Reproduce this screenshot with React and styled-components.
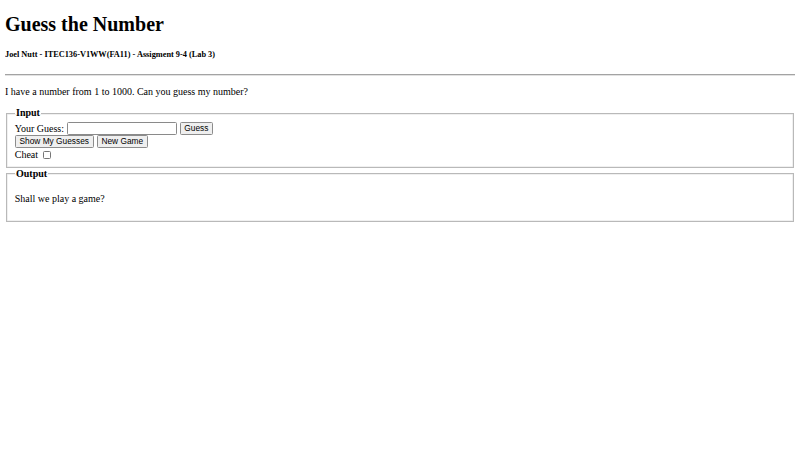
import React, { useState } from 'react'
import styled, { createGlobalStyle } from 'styled-components'

const Global = createGlobalStyle`
  body {
    margin: 0 5px 5px;
    font-family: "Liberation Serif", "Times New Roman", serif;
    font-size: 10px;
    line-height: 11.5px;
    color: #000;
    background: #fff;
  }
`

const Title = styled.h1`
  font-size: 20px;
  line-height: 23px;
  font-weight: bold;
  margin: 13.4px 0;
`

const Byline = styled.h5`
  font-size: 8.3px;
  line-height: 9.6px;
  font-weight: bold;
  margin: 13.9px 0;
`

const Rule = styled.hr`
  height: 0;
  border: 0;
  border-top: 1px solid #a3a3a3;
  border-bottom: 1px solid #e2e2e2;
  margin: 5px 0;
`

const Intro = styled.p`
  margin: 10px 0;
`

const Box = styled.fieldset`
  margin: 0 1.25px;
  padding: 3.5px 7.5px 6.25px;
  border: 1px solid #b9b9b9;
  box-shadow: inset 0 0 0 0.5px #e2e2e2;
  min-width: 0;
`

const Legend = styled.legend`
  font-weight: bold;
  padding: 0 1.25px;
`

const Row = styled.div`
  display: flex;
  align-items: center;
  gap: ${p => p.$gap || 2.5}px;
  height: ${p => p.$h || 13}px;
  white-space: nowrap;
`

const Field = styled.input`
  box-sizing: border-box;
  width: 110px;
  height: 13px;
  padding: 0 2px;
  border: 1px solid #8a8a8a;
  border-radius: 1.5px;
  font: 8.33px "Liberation Sans", Arial, sans-serif;
  margin: 0 0.5px 0 0;
  outline: none;
`

const Button = styled.button`
  box-sizing: border-box;
  font: 8.33px "Liberation Sans", Arial, sans-serif;
  padding: 0 3.75px;
  height: 13px;
  line-height: 11px;
  background: #efefef;
  border: 1px solid #8c8c8c;
  border-radius: 1.5px;
  color: #000;
  margin: 0;
`

const Check = styled.input`
  appearance: none;
  box-sizing: border-box;
  margin: 0 0 0 2px;
  width: 8px;
  height: 8px;
  border: 1px solid #767676;
  border-radius: 1.5px;
  background: #fff;
  &:checked {
    background: #0075ff;
    border-color: #0075ff;
  }
`

const Message = styled.p`
  margin: 10px 0;
`

export default function App() {
  const [guess, setGuess] = useState('')
  const [cheat, setCheat] = useState(false)
  return (
    <>
      <Global />
      <Title>Guess the Number</Title>
      <Byline>Joel Nutt - ITEC136-V1WW(FA11) - Assigment 9-4 (Lab 3)</Byline>
      <Rule />
      <Intro>I have a number from 1 to 1000. Can you guess my number?</Intro>
      <Box>
        <Legend>Input</Legend>
        <Row>
          Your Guess:
          <Field value={guess} onChange={e => setGuess(e.target.value)} />
          <Button>Guess</Button>
        </Row>
        <Row $gap={3}>
          <Button>Show My Guesses</Button>
          <Button>New Game</Button>
        </Row>
        <Row $h={12.5}>
          Cheat
          <Check type="checkbox" checked={cheat} onChange={e => setCheat(e.target.checked)} />
        </Row>
      </Box>
      <Box>
        <Legend>Output</Legend>
        <Message>Shall we play a game?</Message>
      </Box>
    </>
  )
}
